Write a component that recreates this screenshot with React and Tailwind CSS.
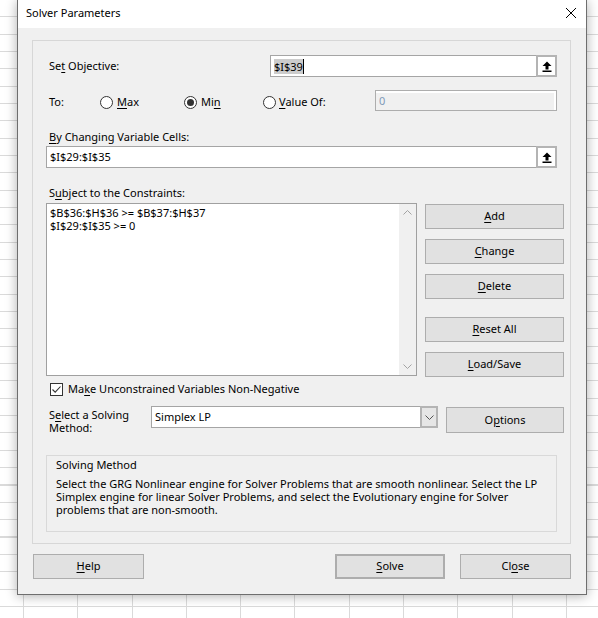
import React from 'react';

const Key = ({ children }) => <span className="underline underline-offset-[2px]">{children}</span>;

const UpArrow = () => (
  <svg width="10" height="11" viewBox="0 0 10 11">
    <path d="M5 0.5 L9.5 5 L6.5 5 L6.5 8.5 L3.5 8.5 L3.5 5 L0.5 5 Z" fill="#000" />
    <rect x="0.5" y="9.5" width="9" height="1.5" fill="#000" />
  </svg>
);

const Chevron = ({ up, color }) => (
  <svg width="9" height="5" viewBox="0 0 9 5">
    <path d={up ? 'M0.5 4.5 L4.5 0.5 L8.5 4.5' : 'M0.5 0.5 L4.5 4.5 L8.5 0.5'} fill="none" stroke={color} strokeWidth="1" />
  </svg>
);

const Radio = ({ checked }) => (
  <span className="flex h-[13px] w-[13px] items-center justify-center rounded-full border border-[#333333] bg-white">
    {checked && <span className="h-[7px] w-[7px] rounded-full bg-[#333333]" />}
  </span>
);

const Btn = ({ children, className = '' }) => (
  <button className={`flex shrink-0 items-center justify-center border border-[#adadad] bg-[#e1e1e1] text-black ${className}`}>
    {children}
  </button>
);

const RefEdit = ({ children, width }) => (
  <div className={`flex h-[22px] border border-[#a5a5a5] bg-white ${width}`}>
    <div className="flex flex-1 items-center pl-[3px]">{children}</div>
    <div className="-my-px -mr-px flex h-[22px] w-[21px] items-center justify-center border-2 border-[#b4b4b4] bg-white">
      <UpArrow />
    </div>
  </div>
);

export default function App() {
  return (
    <div className="h-[618px] w-[598px] overflow-hidden bg-white bg-[repeating-linear-gradient(to_right,transparent_0px,transparent_23px,#dadada_23px,#dadada_24px,transparent_24px,transparent_54.3px),repeating-linear-gradient(to_bottom,transparent_0px,transparent_16.3px,#dadada_16.3px,#dadada_17.34px)] font-['Noto_Sans',sans-serif] text-[11px] text-black">
      <div className="ml-[17px] w-[570px] border-x border-b border-[#6e6e6e] bg-[#f0f0f0] shadow-[0_1px_11px_rgba(0,0,0,0.32)]">
        {/* title bar */}
        <div className="flex h-[28px] items-center justify-between bg-white pb-[2px] pl-[8px] pr-[10px]">
          <span>Solver Parameters</span>
          <svg width="10" height="10" viewBox="0 0 10 10">
            <path d="M0 0 L10 10 M10 0 L0 10" stroke="#000" strokeWidth="1" />
          </svg>
        </div>

        <div className="pl-[14px] pr-[15px] pt-[12px] pb-[15px]">
          {/* group box */}
          <div className="h-[504px] border border-[#d7d7d7] px-[13px]">
            <div className="mt-[14px] flex h-[22px] items-center">
              <span className="pl-[3px]">Se<Key>t</Key> Objective:</span>
              <RefEdit width="ml-auto w-[287px]">
                <span className="bg-[#cccccc] leading-[15px]">$I$39</span>
                <span className="h-[15px] w-px bg-black" />
              </RefEdit>
            </div>

            <div className="mt-[13px] flex h-[21px] items-center">
              <div className="flex items-center pt-[4px]">
                <span className="w-[54px] pl-[3px]">To:</span>
                <span className="flex w-[84px] items-center gap-[4px]">
                  <Radio />
                  <span><Key>M</Key>ax</span>
                </span>
                <span className="flex w-[79px] items-center gap-[4px]">
                  <Radio checked />
                  <span>Mi<Key>n</Key></span>
                </span>
                <span className="flex items-center gap-[3px]">
                  <Radio />
                  <span><Key>V</Key>alue Of:</span>
                </span>
              </div>
              <div className="ml-auto flex h-[21px] w-[182px] flex-col border border-[#adadad] bg-white pb-[4px] pr-[2px] pt-[2px]">
                <div className="flex flex-1 items-center bg-[#f0f0f0] pl-[3px] text-[#7f9ab9]">0</div>
              </div>
            </div>

            <div className="mt-[18px] pl-[3px] leading-[15px]">
              <Key>B</Key>y Changing Variable Cells:
            </div>
            <div className="mt-[2px]">
              <RefEdit width="h-[21px] w-full">$I$29:$I$35</RefEdit>
            </div>

            <div className="mt-[17px] pl-[3px] leading-[15px]">
              S<Key>u</Key>bject to the Constraints:
            </div>

            <div className="-mr-[7px] mt-[3px] flex items-start">
              <div className="flex h-[173px] w-[371px] shrink-0 border border-[#a0a0a0] bg-white">
                <div className="flex-1 pl-[3px] pt-[2px] leading-[13px]">
                  <div>$B$36:$H$36 &gt;= $B$37:$H$37</div>
                  <div>$I$29:$I$35 &gt;= 0</div>
                </div>
                <div className="flex w-[17px] flex-col justify-between bg-[#f0f0f0]">
                  <div className="flex h-[17px] items-center justify-center">
                    <Chevron up color="#a3a3a3" />
                  </div>
                  <div className="flex h-[17px] items-center justify-center">
                    <Chevron color="#a3a3a3" />
                  </div>
                </div>
              </div>
              <div className="ml-[8px] mt-[1px] flex w-[139px] shrink-0 flex-col">
                <Btn className="h-[25px]"><span><Key>A</Key>dd</span></Btn>
                <Btn className="mt-[10px] h-[25px]"><span><Key>C</Key>hange</span></Btn>
                <Btn className="mt-[10px] h-[25px]"><span><Key>D</Key>elete</span></Btn>
                <Btn className="mt-[18px] h-[25px]"><span><Key>R</Key>eset All</span></Btn>
                <Btn className="mt-[10px] h-[25px]"><span><Key>L</Key>oad/Save</span></Btn>
              </div>
            </div>

            <div className="mt-[6px] flex h-[13px] items-center pl-[4px]">
              <span className="flex h-[13px] w-[13px] items-center justify-center border border-[#333333] bg-white">
                <svg width="11" height="11" viewBox="0 0 11 11">
                  <path d="M1.5 5.5 L4.2 8.2 L9.5 2.5" fill="none" stroke="#333333" strokeWidth="1.1" />
                </svg>
              </span>
              <span className="ml-[5px]">Ma<Key>k</Key>e Unconstrained Variables Non-Negative</span>
            </div>

            <div className="-mr-[7px] mt-[10px] flex items-start">
              <div className="w-[105px] shrink-0 pl-[3px] pt-[2px] leading-[13px]">
                S<Key>e</Key>lect a Solving
                <br />
                Method:
              </div>
              <div className="flex h-[22px] w-[287px] shrink-0 border border-[#a5a5a5] bg-white">
                <div className="flex flex-1 items-center pl-[3px]">Simplex LP</div>
                <div className="-my-px -mr-px flex h-[22px] w-[18px] items-center justify-center border-2 border-[#b4b4b4] bg-[#e6e6e6]">
                  <Chevron color="#555555" />
                </div>
              </div>
              <Btn className="ml-[8px] mt-[1px] h-[26px] w-[118px]"><span>O<Key>p</Key>tions</span></Btn>
            </div>

            <div className="mt-[21px] h-[77px] border border-[#d9d9d9] pl-[9px] pt-px">
              <div className="leading-[15px]">Solving Method</div>
              <div className="mt-[5px] whitespace-nowrap leading-[13px]">
                Select the GRG Nonlinear engine for Solver Problems that are smooth nonlinear. Select the LP
                <br />
                Simplex engine for linear Solver Problems, and select the Evolutionary engine for Solver
                <br />
                problems that are non-smooth.
              </div>
            </div>
          </div>

          {/* footer buttons */}
          <div className="mt-[10px] flex">
            <Btn className="ml-px h-[25px] w-[111px]"><span><Key>H</Key>elp</span></Btn>
            <Btn className="ml-auto h-[25px] w-[110px] border-2 border-[#0078d7]"><span><Key>S</Key>olve</span></Btn>
            <Btn className="ml-[15px] h-[25px] w-[111px]"><span>Cl<Key>o</Key>se</span></Btn>
          </div>
        </div>
      </div>
    </div>
  );
}
